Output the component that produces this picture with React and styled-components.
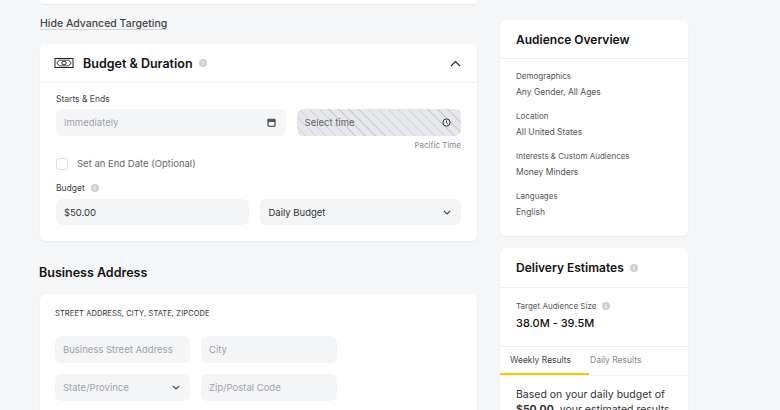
import React from 'react'
import styled, { createGlobalStyle } from 'styled-components'

const GlobalStyle = createGlobalStyle`
    html, body {
        margin: 0;
        padding: 0;
        background: #f5f6f8;
        font-family: Inter, "Open Sans", sans-serif;
        color: #222;
    }
    * { box-sizing: border-box; }
`

const Page = styled.div`
    display: grid;
    grid-template-columns: 437px 188px;
    column-gap: 23px;
    padding-left: 40px;
    height: 410px;
    overflow: hidden;
`

const Column = styled.div`
    display: flex;
    flex-direction: column;
    padding-top: ${p => p.$top || 0}px;
`

const Card = styled.div`
    background: #fff;
    border-radius: 6px;
    box-shadow: 0 1px 2px rgba(20, 30, 50, 0.06);
    margin-top: ${p => p.$mt || 0}px;
`

const TopStub = styled.div`
    height: 4px;
    background: #fff;
    border-radius: 0 0 6px 6px;
    box-shadow: 0 1px 2px rgba(20, 30, 50, 0.06);
`

const ToggleLink = styled.a`
    margin-top: 13px;
    align-self: flex-start;
    font-size: 10.5px;
    line-height: 14px;
    font-weight: 500;
    color: #444;
    text-decoration: underline;
    text-decoration-color: #d6d6d6;
    text-underline-offset: 2px;
`

const CardHeader = styled.div`
    display: flex;
    align-items: center;
    gap: 9px;
    height: 39px;
    padding: 0 16px 0 14px;
    border-bottom: 1px solid #f1f2f4;
`

const CardTitle = styled.h2`
    margin: 0;
    font-size: 12.5px;
    font-weight: 600;
    color: #111;
    display: flex;
    align-items: center;
    gap: 6px;
    flex: 1;
`

const CardBody = styled.div`
    padding: ${p => p.$pad || '10px 16px 16px'};
    display: flex;
    flex-direction: column;
`

const Label = styled.div`
    font-size: 8.5px;
    line-height: 12px;
    color: #444;
    display: flex;
    align-items: center;
    gap: 6px;
    margin-top: ${p => p.$mt || 0}px;
`

const FieldRow = styled.div`
    display: grid;
    grid-template-columns: ${p => p.$cols};
    gap: 11px;
    margin-top: ${p => p.$mt || 0}px;
`

const Field = styled.div`
    height: ${p => p.$h || 27}px;
    border-radius: 6px;
    background: ${p => p.$hatched
        ? 'repeating-linear-gradient(45deg, #e6e7ea 0px, #e6e7ea 6px, #cfd0d4 6px, #cfd0d4 7px)'
        : '#f4f5f7'};
    display: flex;
    align-items: center;
    justify-content: space-between;
    padding: 0 10px 0 8px;
    font-size: 9.5px;
    color: ${p => p.$muted ? '#a0a2a6' : '#333'};
    ${p => p.$hatched && 'color: #666;'}
`

const Hint = styled.div`
    align-self: flex-end;
    margin-top: 3px;
    font-size: 8px;
    line-height: 12px;
    color: #888;
`

const CheckRow = styled.label`
    display: flex;
    align-items: center;
    gap: 9px;
    margin-top: 7px;
    font-size: 9.5px;
    line-height: 12px;
    color: #666;
`

const Checkbox = styled.span`
    width: 12px;
    height: 12px;
    border: 1px solid #dcdde0;
    border-radius: 3px;
    background: #fff;
`

const SectionTitle = styled.h2`
    margin: 24px 0 0;
    font-size: 12.5px;
    line-height: 16px;
    font-weight: 600;
    color: #111;
    margin-left: -1px;
`

const Caps = styled.div`
    font-size: 7.5px;
    line-height: 12px;
    letter-spacing: 0.1px;
    text-transform: uppercase;
    color: #333;
`

const SideHeader = styled.div`
    height: ${p => p.$h || 39}px;
    display: flex;
    align-items: center;
    gap: 6px;
    padding: 0 16px;
    border-bottom: 1px solid #eeeff1;
    font-size: 12px;
    font-weight: 600;
    color: #111;
`

const Group = styled.div`
    display: flex;
    flex-direction: column;
    gap: 4px;
    & + & { margin-top: 12px; }
`

const GroupLabel = styled.div`
    font-size: 8px;
    line-height: 12px;
    color: #555;
    display: flex;
    align-items: center;
    gap: 6px;
`

const GroupValue = styled.div`
    font-size: 8.5px;
    line-height: 12px;
    color: #555;
`

const BigValue = styled.div`
    font-size: 11px;
    line-height: 14px;
    font-weight: 500;
    color: #111;
`

const Tabs = styled.div`
    display: flex;
    border-top: 1px solid #eeeff1;
    border-bottom: 1px solid #f3f4f5;
`

const Tab = styled.div`
    width: ${p => p.$w}px;
    height: 28px;
    display: flex;
    align-items: center;
    padding-left: ${p => p.$pl}px;
    font-size: 8.5px;
    color: ${p => p.$active ? '#444' : '#888'};
    border-bottom: 2px solid ${p => p.$active ? '#fcc500' : 'transparent'};
`

const Paragraph = styled.p`
    margin: 0;
    padding: 11px 16px 0;
    font-size: 10.5px;
    line-height: 15px;
    color: #333;
`

const Info = () => (
    <svg width="8" height="8" viewBox="0 0 8 8">
        <circle cx="4" cy="4" r="4" fill="#cfd0d3" />
        <rect x="3.5" y="3.4" width="1" height="2.8" fill="#fff" />
        <circle cx="4" cy="2.3" r="0.6" fill="#fff" />
    </svg>
)

const MoneyIcon = () => (
    <svg width="20" height="12" viewBox="0 0 20 12" fill="none" stroke="#222" strokeWidth="1">
        <rect x="1" y="1.5" width="18" height="9" />
        <path d="M5 3.2h10a1.8 1.8 0 0 0 1.8 1.8v2a1.8 1.8 0 0 0-1.8 1.8H5a1.8 1.8 0 0 0-1.8-1.8V5A1.8 1.8 0 0 0 5 3.2z" strokeWidth="0.8" />
        <ellipse cx="10" cy="6" rx="2.2" ry="1.9" />
    </svg>
)

const ChevronUp = () => (
    <svg width="11" height="7" viewBox="0 0 11 7" fill="none" stroke="#222" strokeWidth="1.1">
        <path d="M1 6l4.5-4.5L10 6" />
    </svg>
)

const ChevronDown = ({ color = '#444' }) => (
    <svg width="8" height="5" viewBox="0 0 8 5" fill="none" stroke={color} strokeWidth="1.1">
        <path d="M1 1l3 3 3-3" />
    </svg>
)

const CalendarIcon = () => (
    <svg width="9" height="9" viewBox="0 0 9 9" fill="none" stroke="#333" strokeWidth="1.1">
        <rect x="1" y="1.2" width="7" height="7" rx="0.8" />
        <path d="M1 3h7" strokeWidth="1.6" />
    </svg>
)

const ClockIcon = () => (
    <svg width="9" height="9" viewBox="0 0 9 9" fill="none" stroke="#333" strokeWidth="1">
        <circle cx="4.5" cy="4.5" r="3.6" />
        <path d="M4.5 2.6v2.1l1.3 1" />
    </svg>
)

export default function App() {
    return (
        <>
            <GlobalStyle />
            <Page>
                <Column>
                    <TopStub />
                    <ToggleLink>Hide Advanced Targeting</ToggleLink>
                    <Card $mt={13}>
                        <CardHeader>
                            <MoneyIcon />
                            <CardTitle>Budget &amp; Duration <Info /></CardTitle>
                            <ChevronUp />
                        </CardHeader>
                        <CardBody>
                            <Label>Starts &amp; Ends</Label>
                            <FieldRow $cols="229fr 164fr" $mt={4}>
                                <Field $muted>Immediately <CalendarIcon /></Field>
                                <Field $hatched>Select time <ClockIcon /></Field>
                            </FieldRow>
                            <Hint>Pacific Time</Hint>
                            <CheckRow><Checkbox />Set an End Date (Optional)</CheckRow>
                            <Label $mt={12}>Budget <Info /></Label>
                            <FieldRow $cols="193fr 200fr" $mt={5}>
                                <Field $h={26}>$50.00</Field>
                                <Field $h={26}>Daily Budget <ChevronDown /></Field>
                            </FieldRow>
                        </CardBody>
                    </Card>
                    <SectionTitle>Business Address</SectionTitle>
                    <Card $mt={13}>
                        <CardBody $pad="14px 15px 16px">
                            <Caps>Street Address, City, State, Zipcode</Caps>
                            <FieldRow $cols="135px 136px" $mt={16}>
                                <Field $muted>Business Street Address</Field>
                                <Field $muted>City</Field>
                            </FieldRow>
                            <FieldRow $cols="135px 136px" $mt={11}>
                                <Field $muted>State/Province <ChevronDown /></Field>
                                <Field $muted>Zip/Postal Code</Field>
                            </FieldRow>
                        </CardBody>
                    </Card>
                </Column>
                <Column $top={20}>
                    <Card>
                        <SideHeader>Audience Overview</SideHeader>
                        <CardBody $pad="11px 16px 18px">
                            <Group>
                                <GroupLabel>Demographics</GroupLabel>
                                <GroupValue>Any Gender, All Ages</GroupValue>
                            </Group>
                            <Group>
                                <GroupLabel>Location</GroupLabel>
                                <GroupValue>All United States</GroupValue>
                            </Group>
                            <Group>
                                <GroupLabel>Interests &amp; Custom Audiences</GroupLabel>
                                <GroupValue>Money Minders</GroupValue>
                            </Group>
                            <Group>
                                <GroupLabel>Languages</GroupLabel>
                                <GroupValue>English</GroupValue>
                            </Group>
                        </CardBody>
                    </Card>
                    <Card $mt={12}>
                        <SideHeader $h={40}>Delivery Estimates <Info /></SideHeader>
                        <CardBody $pad="12px 16px 16px">
                            <Group>
                                <GroupLabel>Target Audience Size <Info /></GroupLabel>
                                <BigValue>38.0M - 39.5M</BigValue>
                            </Group>
                        </CardBody>
                        <Tabs>
                            <Tab $w={89} $pl={10} $active>Weekly Results</Tab>
                            <Tab $w={80} $pl={1}>Daily Results</Tab>
                        </Tabs>
                        <Paragraph>Based on your daily budget of <b>$50.00</b>, your estimated results</Paragraph>
                    </Card>
                </Column>
            </Page>
        </>
    )
}
